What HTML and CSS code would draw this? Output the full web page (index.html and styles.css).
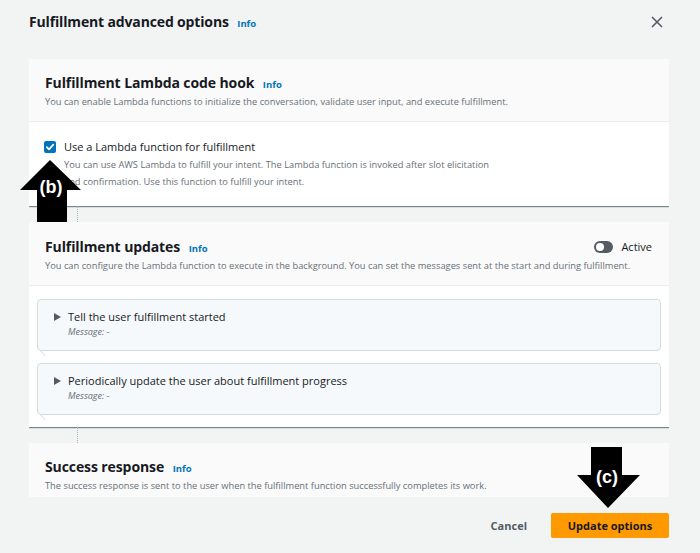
FILE: index.html
```html
<!DOCTYPE html>
<html lang="en">
<head>
<meta charset="utf-8">
<title>Fulfillment advanced options</title>
<link rel="stylesheet" href="styles.css">
</head>
<body>
<div class="modal">
  <header class="modal-head">
    <h1 class="modal-title">Fulfillment advanced options <a class="info">Info</a></h1>
    <button class="close" aria-label="Close">
      <svg width="12" height="12" viewBox="0 0 12 12"><path d="M1 1 L11 11 M11 1 L1 11" stroke="#545b64" stroke-width="1.6" fill="none"/></svg>
    </button>
  </header>

  <div class="modal-body">
    <section class="card">
      <div class="card-head">
        <h2 class="card-title">Fulfillment Lambda code hook <a class="info">Info</a></h2>
        <p class="card-desc">You can enable Lambda functions to initialize the conversation, validate user input, and execute fulfillment.</p>
      </div>
      <div class="card-body card-body-check">
        <label class="check-row">
          <span class="checkbox"><svg width="12" height="12" viewBox="0 0 12 12"><path d="M2.8 6.2 L5 8.4 L9.3 3.6" stroke="#fff" stroke-width="1.7" fill="none" stroke-linecap="round" stroke-linejoin="round"/></svg></span>
          <span class="check-text">
            <span class="check-label">Use a Lambda function for fulfillment</span>
            <span class="check-desc">You can use AWS Lambda to fulfill your intent. The Lambda function is invoked after slot elicitation and confirmation. Use this function to fulfill your intent.</span>
          </span>
        </label>
      </div>
    </section>

    <div class="connector"></div>

    <section class="card">
      <div class="card-head card-head-toggle">
        <div class="head-main">
          <h2 class="card-title">Fulfillment updates <a class="info">Info</a></h2>
          <p class="card-desc">You can configure the Lambda function to execute in the background. You can set the messages sent at the start and during fulfillment.</p>
        </div>
        <div class="toggle-wrap"><span class="toggle"><span class="knob"></span></span><span class="toggle-label">Active</span></div>
      </div>
      <div class="card-body card-body-list">
        <div class="expand">
          <div class="expand-row"><span class="caret"></span><span class="expand-title">Tell the user fulfillment started</span></div>
          <div class="expand-msg"><em>Message:</em> -</div>
        </div>
        <div class="expand">
          <div class="expand-row"><span class="caret"></span><span class="expand-title">Periodically update the user about fulfillment progress</span></div>
          <div class="expand-msg"><em>Message:</em> -</div>
        </div>
      </div>
    </section>

    <div class="connector"></div>

    <section class="card">
      <div class="card-head">
        <h2 class="card-title">Success response <a class="info">Info</a></h2>
        <p class="card-desc">The success response is sent to the user when the fulfillment function successfully completes its work.</p>
      </div>
      <div class="card-body card-body-empty"></div>
    </section>
  </div>

  <footer class="modal-foot">
    <button class="btn-link">Cancel</button>
    <button class="btn-primary">Update options</button>
  </footer>
</div>

<div class="anno anno-b">
  <svg width="64" height="64" viewBox="0 0 64 64"><polygon points="30,0 61,30 47,30 47,62 17,62 17,30 0,30" fill="#000"/></svg>
  <span class="anno-text">(b)</span>
</div>
<div class="anno anno-c">
  <svg width="64" height="64" viewBox="0 0 64 64"><polygon points="14,0 45,0 45,28 63,28 31,61 0,28 14,28" fill="#000"/></svg>
  <span class="anno-text">(c)</span>
</div>
</body>
</html>
```

FILE: styles.css
```css
* { box-sizing: border-box; }

html, body {
  margin: 0;
  padding: 0;
  background: #f2f3f3;
}

body {
  font-family: "Open Sans", "Noto Sans", sans-serif;
  color: #16191f;
  width: 700px;
  height: 553px;
  overflow: hidden;
  position: relative;
}

.modal {
  display: flex;
  flex-direction: column;
  height: 553px;
  padding: 0 31px 0 29px;
}

.modal-head {
  display: flex;
  align-items: center;
  justify-content: space-between;
  height: 46px;
  padding-top: 0;
}

.modal-title {
  margin: 0;
  font-size: 14px;
  font-weight: 700;
  letter-spacing: -0.15px;
  line-height: 20px;
}

.info {
  font-size: 9.5px;
  font-weight: 700;
  color: #0073bb;
  margin-left: 5px;
  letter-spacing: 0;
}

.close {
  background: none;
  border: 0;
  padding: 0;
  width: 12px;
  height: 12px;
  margin-right: 6px;
  margin-top: -2px;
  display: flex;
}

.modal-body {
  margin-top: 13px;
  height: 438px;
  overflow: hidden;
  display: flex;
  flex-direction: column;
}

.card {
  background: #fff;
  box-shadow: 0 1px 1px 0 rgba(0, 28, 36, 0.35), 1px 1px 1px 0 rgba(0, 28, 36, 0.18), -1px 1px 1px 0 rgba(0, 28, 36, 0.08);
  flex: none;
}

.card-head {
  background: #fafafa;
  border-bottom: 1px solid #eaeded;
  padding: 14px 16px 12px 16px;
}

.card-title {
  margin: 0;
  font-size: 14px;
  font-weight: 700;
  line-height: 20px;
  letter-spacing: -0.1px;
}

.card-desc {
  margin: -1px 0 0;
  font-size: 9.3px;
  line-height: 15px;
  color: #687078;
}

.card-head-toggle {
  display: flex;
  align-items: flex-start;
  justify-content: space-between;
  padding-top: 15px;
}

.head-main { flex: 1; min-width: 0; }

.toggle-wrap {
  display: flex;
  align-items: center;
  gap: 8px;
  margin-left: -200px;
  margin-top: 4px;
  margin-right: 1px;
}

.toggle {
  width: 19px;
  height: 12px;
  border-radius: 6px;
  background: #545b64;
  display: flex;
  align-items: center;
  padding-left: 2px;
}

.knob {
  width: 8px;
  height: 8px;
  border-radius: 50%;
  background: #fff;
}

.toggle-label {
  font-size: 11px;
  line-height: 12px;
  color: #16191f;
}

.card-body-check {
  padding: 17px 16px 16px 15px;
}

.check-row {
  display: flex;
  gap: 8px;
}

.checkbox {
  width: 12px;
  height: 12px;
  border-radius: 2px;
  background: #0073bb;
  flex: none;
  margin-top: 2px;
  display: flex;
}

.check-text {
  display: flex;
  flex-direction: column;
  width: 440px;
}

.check-label {
  font-size: 11px;
  line-height: 16px;
}

.check-desc {
  margin-top: 1px;
  font-size: 9.3px;
  line-height: 17px;
  color: #687078;
}

.connector {
  height: 16px;
  margin-left: 48px;
  border-left: 1px dotted #9fb8c6;
  flex: none;
}

.card-body-list {
  padding: 13px 8px 12px 8px;
  display: flex;
  flex-direction: column;
  gap: 12px;
}

.expand {
  position: relative;
  background: #f6f9fc;
  border: 1px solid #d5dbdb;
  border-radius: 4px;
  padding: 9px 12px 9px 16px;
  height: 52px;
}

.expand::after {
  content: "";
  position: absolute;
  left: 2px;
  bottom: -6px;
  width: 5px;
  height: 5px;
  background: #fff;
  border-left: 1px solid #d5dbdb;
  transform: skewX(45deg);
  transform-origin: top left;
}

.expand-row {
  display: flex;
  align-items: center;
  gap: 7px;
}

.caret {
  width: 0;
  height: 0;
  border-top: 4px solid transparent;
  border-bottom: 4px solid transparent;
  border-left: 7px solid #545b64;
}

.expand-title {
  font-size: 11px;
  line-height: 16px;
}

.expand-msg {
  margin-left: 14px;
  font-size: 9px;
  line-height: 14px;
  color: #687078;
}

.card-body-empty {
  height: 60px;
}

.modal-foot {
  display: flex;
  justify-content: flex-end;
  align-items: center;
  gap: 24px;
  margin-top: 16px;
}

.btn-link {
  background: none;
  border: 0;
  font-family: inherit;
  font-size: 11px;
  font-weight: 700;
  color: #545b64;
  padding: 0;
}

.btn-primary {
  background: #ff9900;
  border: 0;
  border-radius: 2px;
  width: 118px;
  height: 25px;
  font-family: inherit;
  font-size: 11px;
  font-weight: 700;
  color: #16191f;
}

.anno {
  position: absolute;
  width: 64px;
  height: 64px;
}

.anno svg { display: block; }

.anno-b { left: 20px; top: 160px; }
.anno-c { left: 577px; top: 447px; }

.anno-text {
  position: absolute;
  left: 0;
  width: 62px;
  text-align: center;
  color: #fff;
  font-family: "Liberation Sans", Arial, sans-serif;
  font-weight: 700;
  font-size: 18px;
  line-height: 20px;
}

.anno-b .anno-text { top: 17px; }
.anno-c .anno-text { top: 20px; left: -1px; }
```
